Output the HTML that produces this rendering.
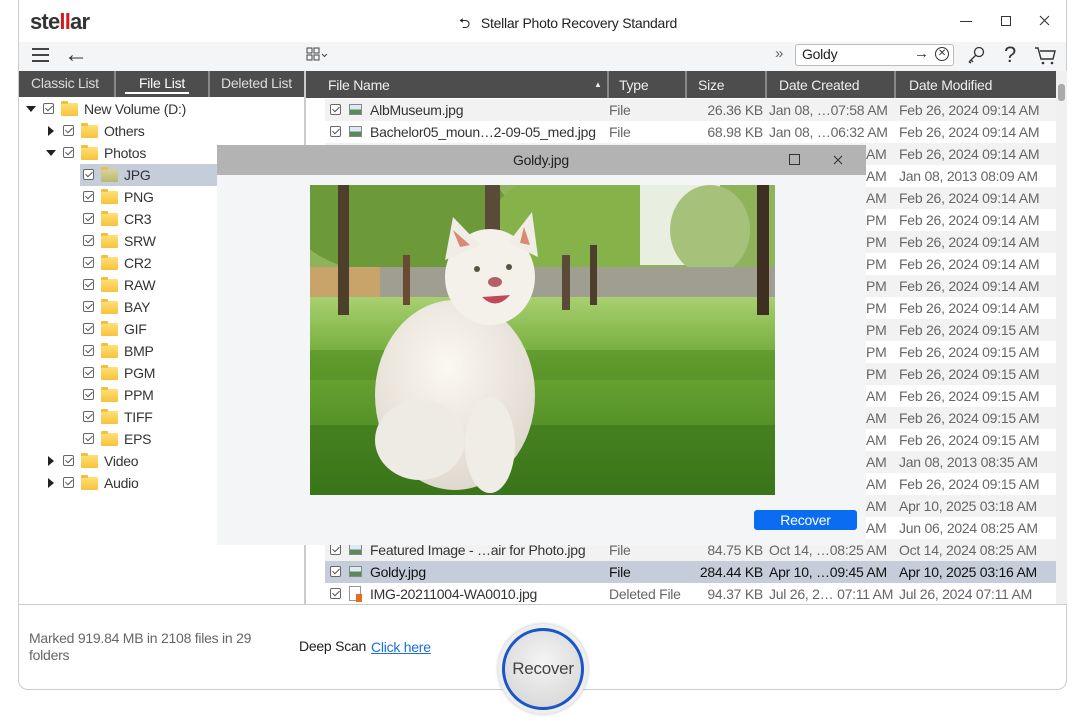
<!DOCTYPE html>
<html><head><meta charset="utf-8"><style>
*{margin:0;padding:0;box-sizing:border-box}
body{width:1082px;height:717px;background:#fff;font-family:"Liberation Sans",sans-serif;font-size:14px;color:#333;position:relative;overflow:hidden;letter-spacing:-0.25px}
.a{position:absolute;white-space:nowrap}
.win{position:absolute;left:18px;top:0;width:1049px;height:690px;border:1px solid #ccc;border-top:none;border-radius:0 0 10px 10px;background:#fff}
.cb{position:absolute;width:11px;height:11px;border:1px solid #666;border-radius:2px;background:#fff}
.cb:after{content:"";position:absolute;left:3px;top:0px;width:3px;height:6px;border:solid #555;border-width:0 1px 1px 0;transform:rotate(45deg)}
.fd{position:absolute;width:17px;height:13px;background:linear-gradient(#ffe07a,#f7c23a);border-radius:1px}
.fd:before{content:"";position:absolute;left:0;top:-2px;width:7px;height:3px;background:#f0c040;border-radius:1px 1px 0 0}
.tri{position:absolute;width:0;height:0}
.td{border-left:5px solid transparent;border-right:5px solid transparent;border-top:6px solid #222}
.tr{border-top:5px solid transparent;border-bottom:5px solid transparent;border-left:6px solid #222}
.row{position:absolute;left:325px;width:731px;height:22px}
.row span{position:absolute;top:3px}
.ic{position:absolute;left:24px;top:5px;width:13px;height:11px;border:1px solid #888;background:linear-gradient(#ddeaf5 50%,#5a8a5a 50%)}
</style></head><body>
<div class="win"></div>
<!-- title -->
<div class="a" style="left:30px;top:9px;font-size:22px;font-weight:bold;color:#333;letter-spacing:-0.8px">ste<span style="color:#d01c1c">ll</span>ar</div>
<div class="a" style="left:459px;top:13px;font-size:14px;color:#222">⮌&nbsp;&nbsp; Stellar Photo Recovery Standard</div>
<div class="a" style="left:960px;top:21px;width:12px;height:1px;background:#333"></div>
<div class="a" style="left:1001px;top:16px;width:10px;height:10px;border:1px solid #333"></div>
<svg class="a" style="left:1039px;top:15px" width="11" height="11"><path d="M1 1L10 10M10 1L1 10" stroke="#333" stroke-width="1.1"/></svg>
<!-- toolbar -->
<div class="a" style="left:19px;top:42px;width:1047px;height:29px;background:#f4f5f7"></div>
<div class="a" style="left:32px;top:48px;width:17px;height:2px;background:#444;box-shadow:0 6px 0 #444,0 12px 0 #444"></div>
<div class="a" style="left:64px;top:41px;font-size:24px;color:#333">←</div>
<svg class="a" style="left:306px;top:47px" width="26" height="16"><g fill="none" stroke="#444"><rect x="1" y="1" width="5" height="5"/><rect x="8" y="1" width="5" height="5"/><rect x="1" y="8" width="5" height="5"/><rect x="8" y="8" width="5" height="5"/><path d="M16 7l2.5 2.5L21 7"/></g></svg>
<div class="a" style="left:775px;top:45px;font-size:15px;color:#666">»</div>
<div class="a" style="left:795px;top:44px;width:159px;height:22px;border:1px solid #bbb;border-radius:3px;background:#fff"></div>
<div class="a" style="left:802px;top:46px;font-size:14px;color:#222">Goldy</div>
<div class="a" style="left:914px;top:45px;font-size:15px;color:#333">→</div>
<div class="a" style="left:935px;top:47px;width:14px;height:14px;border:1px solid #333;border-radius:50%;font-size:10px;line-height:12px;text-align:center">✕</div>
<svg class="a" style="left:966px;top:45px" width="20" height="20"><g fill="none" stroke="#333" stroke-width="1.3"><circle cx="13" cy="7" r="4.5"/><path d="M10 10L3 17M5 15l2 2M3 17l2 1"/></g></svg>
<div class="a" style="left:1004px;top:42px;font-size:22px;color:#333">?</div>
<svg class="a" style="left:1034px;top:46px" width="24" height="20"><g fill="none" stroke="#333" stroke-width="1.4"><path d="M1 2h3l3 11h12l2-8H6"/></g><circle cx="9" cy="17" r="1.3" fill="#333"/><circle cx="18" cy="17" r="1.3" fill="#333"/></svg>
<!-- tabs -->
<div class="a" style="left:19px;top:71px;width:285px;height:26px;background:#4d4d4d"></div>
<div class="a" style="left:114px;top:71px;width:2px;height:26px;background:#888"></div>
<div class="a" style="left:208px;top:71px;width:2px;height:26px;background:#888"></div>
<div class="a" style="left:31px;top:75px;color:#ddd">Classic List</div>
<div class="a" style="left:139px;top:75px;color:#fff">File List</div>
<div class="a" style="left:125px;top:92px;width:64px;height:2px;background:#fff"></div>
<div class="a" style="left:221px;top:75px;color:#ddd">Deleted List</div>
<div class="a" style="left:304px;top:71px;width:2px;height:533px;background:#ccc"></div>
<!-- tree -->
<div class="a" style="left:80px;top:164px;width:137px;height:22px;background:#c5cdda"></div>
<div class="tri td" style="left:26px;top:106px"></div><div class="cb" style="left:43px;top:103px"></div><div class="fd" style="left:61px;top:103px"></div><div class="a" style="left:84px;top:101px">New Volume (D:)</div>
<div class="tri tr" style="left:48px;top:126px"></div><div class="cb" style="left:63px;top:125px"></div><div class="fd" style="left:81px;top:125px"></div><div class="a" style="left:104px;top:123px">Others</div>
<div class="tri td" style="left:46px;top:150px"></div><div class="cb" style="left:63px;top:147px"></div><div class="fd" style="left:81px;top:147px"></div><div class="a" style="left:104px;top:145px">Photos</div>
<div class="cb" style="left:83px;top:169px"></div><div class="fd" style="left:101px;top:169px;background:linear-gradient(#d6d59a,#b9b870)"></div><div class="a" style="left:124px;top:167px">JPG</div>
<div class="cb" style="left:83px;top:191px"></div><div class="fd" style="left:101px;top:191px"></div><div class="a" style="left:124px;top:189px">PNG</div>
<div class="cb" style="left:83px;top:213px"></div><div class="fd" style="left:101px;top:213px"></div><div class="a" style="left:124px;top:211px">CR3</div>
<div class="cb" style="left:83px;top:235px"></div><div class="fd" style="left:101px;top:235px"></div><div class="a" style="left:124px;top:233px">SRW</div>
<div class="cb" style="left:83px;top:257px"></div><div class="fd" style="left:101px;top:257px"></div><div class="a" style="left:124px;top:255px">CR2</div>
<div class="cb" style="left:83px;top:279px"></div><div class="fd" style="left:101px;top:279px"></div><div class="a" style="left:124px;top:277px">RAW</div>
<div class="cb" style="left:83px;top:301px"></div><div class="fd" style="left:101px;top:301px"></div><div class="a" style="left:124px;top:299px">BAY</div>
<div class="cb" style="left:83px;top:323px"></div><div class="fd" style="left:101px;top:323px"></div><div class="a" style="left:124px;top:321px">GIF</div>
<div class="cb" style="left:83px;top:345px"></div><div class="fd" style="left:101px;top:345px"></div><div class="a" style="left:124px;top:343px">BMP</div>
<div class="cb" style="left:83px;top:367px"></div><div class="fd" style="left:101px;top:367px"></div><div class="a" style="left:124px;top:365px">PGM</div>
<div class="cb" style="left:83px;top:389px"></div><div class="fd" style="left:101px;top:389px"></div><div class="a" style="left:124px;top:387px">PPM</div>
<div class="cb" style="left:83px;top:411px"></div><div class="fd" style="left:101px;top:411px"></div><div class="a" style="left:124px;top:409px">TIFF</div>
<div class="cb" style="left:83px;top:433px"></div><div class="fd" style="left:101px;top:433px"></div><div class="a" style="left:124px;top:431px">EPS</div>
<div class="tri tr" style="left:48px;top:456px"></div><div class="cb" style="left:63px;top:455px"></div><div class="fd" style="left:81px;top:455px"></div><div class="a" style="left:104px;top:453px">Video</div>
<div class="tri tr" style="left:48px;top:478px"></div><div class="cb" style="left:63px;top:477px"></div><div class="fd" style="left:81px;top:477px"></div><div class="a" style="left:104px;top:475px">Audio</div>
<!-- table header -->
<div class="a" style="left:306px;top:71px;width:750px;height:27px;background:#4d4d4d"></div>
<div class="a" style="left:607px;top:71px;width:2px;height:27px;background:#888"></div>
<div class="a" style="left:685px;top:71px;width:2px;height:27px;background:#888"></div>
<div class="a" style="left:765px;top:71px;width:2px;height:27px;background:#888"></div>
<div class="a" style="left:894px;top:71px;width:2px;height:27px;background:#888"></div>
<div class="a" style="left:328px;top:77px;color:#eee">File Name</div>
<div class="a" style="left:594px;top:80px;font-size:8px;color:#eee">▲</div>
<div class="a" style="left:619px;top:77px;color:#eee">Type</div>
<div class="a" style="left:698px;top:77px;color:#eee">Size</div>
<div class="a" style="left:779px;top:77px;color:#eee">Date Created</div>
<div class="a" style="left:909px;top:77px;color:#eee">Date Modified</div>
<div class="a" style="left:1056px;top:71px;width:11px;height:533px;background:#f0f0f0"></div>
<div class="a" style="left:1058px;top:84px;width:7px;height:17px;background:#aaa;border-radius:3px"></div>
<!-- rows -->
<div class="row" style="top:99px;background:#f2f2f2"><div class="cb" style="left:5px;top:5px"></div><div class="ic"></div><span style="left:45px">AlbMuseum.jpg</span><span style="left:284px;color:#666">File</span><span style="right:293px;color:#666">26.36 KB</span><span style="left:444px;color:#666">Jan 08, …07:58 AM</span><span style="left:574px;color:#666">Feb 26, 2024 09:14 AM</span></div>
<div class="row" style="top:121px"><div class="cb" style="left:5px;top:5px"></div><div class="ic"></div><span style="left:45px">Bachelor05_moun…2-09-05_med.jpg</span><span style="left:284px;color:#666">File</span><span style="right:293px;color:#666">68.98 KB</span><span style="left:444px;color:#666">Jan 08, …06:32 AM</span><span style="left:574px;color:#666">Feb 26, 2024 09:14 AM</span></div>
<div class="row" style="top:143px;background:#f2f2f2"><span style="left:541px;color:#666">AM</span><span style="left:574px;color:#666">Feb 26, 2024 09:14 AM</span></div>
<div class="row" style="top:165px"><span style="left:541px;color:#666">AM</span><span style="left:574px;color:#666">Jan 08, 2013 08:09 AM</span></div>
<div class="row" style="top:187px;background:#f2f2f2"><span style="left:541px;color:#666">AM</span><span style="left:574px;color:#666">Feb 26, 2024 09:14 AM</span></div>
<div class="row" style="top:209px"><span style="left:541px;color:#666">PM</span><span style="left:574px;color:#666">Feb 26, 2024 09:14 AM</span></div>
<div class="row" style="top:231px;background:#f2f2f2"><span style="left:541px;color:#666">PM</span><span style="left:574px;color:#666">Feb 26, 2024 09:14 AM</span></div>
<div class="row" style="top:253px"><span style="left:541px;color:#666">PM</span><span style="left:574px;color:#666">Feb 26, 2024 09:14 AM</span></div>
<div class="row" style="top:275px;background:#f2f2f2"><span style="left:541px;color:#666">PM</span><span style="left:574px;color:#666">Feb 26, 2024 09:14 AM</span></div>
<div class="row" style="top:297px"><span style="left:541px;color:#666">PM</span><span style="left:574px;color:#666">Feb 26, 2024 09:14 AM</span></div>
<div class="row" style="top:319px;background:#f2f2f2"><span style="left:541px;color:#666">PM</span><span style="left:574px;color:#666">Feb 26, 2024 09:15 AM</span></div>
<div class="row" style="top:341px"><span style="left:541px;color:#666">PM</span><span style="left:574px;color:#666">Feb 26, 2024 09:15 AM</span></div>
<div class="row" style="top:363px;background:#f2f2f2"><span style="left:541px;color:#666">PM</span><span style="left:574px;color:#666">Feb 26, 2024 09:15 AM</span></div>
<div class="row" style="top:385px"><span style="left:541px;color:#666">AM</span><span style="left:574px;color:#666">Feb 26, 2024 09:15 AM</span></div>
<div class="row" style="top:407px;background:#f2f2f2"><span style="left:541px;color:#666">AM</span><span style="left:574px;color:#666">Feb 26, 2024 09:15 AM</span></div>
<div class="row" style="top:429px"><span style="left:541px;color:#666">AM</span><span style="left:574px;color:#666">Feb 26, 2024 09:15 AM</span></div>
<div class="row" style="top:451px;background:#f2f2f2"><span style="left:541px;color:#666">AM</span><span style="left:574px;color:#666">Jan 08, 2013 08:35 AM</span></div>
<div class="row" style="top:473px"><span style="left:541px;color:#666">AM</span><span style="left:574px;color:#666">Feb 26, 2024 09:15 AM</span></div>
<div class="row" style="top:495px;background:#f2f2f2"><span style="left:541px;color:#666">AM</span><span style="left:574px;color:#666">Apr 10, 2025 03:18 AM</span></div>
<div class="row" style="top:517px"><span style="left:541px;color:#666">AM</span><span style="left:574px;color:#666">Jun 06, 2024 08:25 AM</span></div>
<div class="row" style="top:539px;background:#f2f2f2"><div class="cb" style="left:5px;top:5px"></div><div class="ic"></div><span style="left:45px">Featured Image - …air for Photo.jpg</span><span style="left:284px;color:#666">File</span><span style="right:293px;color:#666">84.75 KB</span><span style="left:444px;color:#666">Oct 14, …08:25 AM</span><span style="left:574px;color:#666">Oct 14, 2024 08:25 AM</span></div>
<div class="row" style="top:561px;background:#c5cdda;color:#111"><div class="cb" style="left:5px;top:5px"></div><div class="ic"></div><span style="left:45px">Goldy.jpg</span><span style="left:284px">File</span><span style="right:293px">284.44 KB</span><span style="left:444px">Apr 10, …09:45 AM</span><span style="left:574px">Apr 10, 2025 03:16 AM</span></div>
<div class="row" style="top:583px"><div class="cb" style="left:5px;top:5px"></div><div class="a" style="left:24px;top:3px;width:12px;height:15px;border:1px solid #999;background:#fff"></div><div class="a" style="left:31px;top:11px;width:6px;height:8px;background:#e07020"></div><span style="left:45px">IMG-20211004-WA0010.jpg</span><span style="left:284px;color:#666">Deleted File</span><span style="right:293px;color:#666">94.37 KB</span><span style="left:444px;color:#666">Jul 26, 2… 07:11 AM</span><span style="left:574px;color:#666">Jul 26, 2024 07:11 AM</span></div>
<div class="a" style="left:19px;top:604px;width:1047px;height:1px;background:#ccc"></div>
<!-- popup -->
<div class="a" style="left:217px;top:145px;width:649px;height:400px;background:#f4f5f7"></div>
<div class="a" style="left:217px;top:145px;width:649px;height:30px;background:#b3b3b3"></div>
<div class="a" style="left:513px;top:152px;color:#222">Goldy.jpg</div>
<div class="a" style="left:789px;top:154px;width:11px;height:11px;border:1px solid #333"></div>
<svg class="a" style="left:833px;top:155px" width="10" height="10"><path d="M1 1L9 9M9 1L1 9" stroke="#333" stroke-width="1.1"/></svg>
<svg class="a" style="left:310px;top:185px" width="465" height="310" viewBox="0 0 465 310">
<defs><linearGradient id="g" x1="0" y1="0" x2="0" y2="1"><stop offset="0" stop-color="#a8d070"/><stop offset="0.35" stop-color="#6aa632"/><stop offset="1" stop-color="#3d7a1c"/></linearGradient>
<radialGradient id="d" cx="0.45" cy="0.35" r="0.7"><stop offset="0" stop-color="#fbf8f2"/><stop offset="1" stop-color="#ddd6cc"/></radialGradient></defs>
<rect width="465" height="120" fill="#8fb35a"/>
<ellipse cx="90" cy="30" rx="110" ry="60" fill="#6c9a38"/>
<ellipse cx="270" cy="40" rx="90" ry="55" fill="#86b24a"/>
<rect x="330" y="0" width="80" height="80" fill="#e8efe0"/>
<ellipse cx="400" cy="45" rx="40" ry="45" fill="#a6c27a"/>
<rect x="0" y="82" width="465" height="33" fill="#a09e90"/>
<rect x="0" y="82" width="70" height="33" fill="#c9a46a"/>
<rect x="0" y="112" width="465" height="198" fill="url(#g)"/>
<rect x="0" y="165" width="465" height="30" fill="#4f8a24" opacity="0.5"/>
<rect x="0" y="240" width="465" height="70" fill="#356f18" opacity="0.5"/>
<rect x="28" y="0" width="11" height="130" fill="#4e3f2c"/>
<rect x="175" y="0" width="15" height="60" fill="#5a4a38"/>
<rect x="252" y="70" width="8" height="55" fill="#5a4a38"/>
<rect x="280" y="60" width="7" height="60" fill="#4e3f2c"/>
<rect x="447" y="0" width="12" height="130" fill="#3e2f22"/>
<rect x="93" y="70" width="7" height="50" fill="#6a4a30"/>
<ellipse cx="145" cy="210" rx="80" ry="95" fill="url(#d)"/>
<ellipse cx="110" cy="255" rx="45" ry="40" fill="#eeeae4"/>
<ellipse cx="180" cy="260" rx="25" ry="48" fill="#f0ece6"/>
<ellipse cx="180" cy="92" rx="45" ry="48" fill="#f4f0ea"/>
<path d="M135 75L143 32L170 60Z" fill="#f0ece6"/><path d="M198 58L222 27L228 72Z" fill="#f0ece6"/>
<path d="M143 45L150 62L160 60Z" fill="#d98a70"/><path d="M214 42L220 60L210 58Z" fill="#d98a70"/>
<circle cx="167" cy="84" r="3" fill="#554"/><circle cx="199" cy="82" r="3" fill="#554"/>
<ellipse cx="185" cy="97" rx="7" ry="5" fill="#b3606a"/>
<path d="M172 112Q186 126 200 110Z" fill="#c04a58"/>
</svg>
<div class="a" style="left:754px;top:510px;width:103px;height:20px;background:#0a6cf0;border-radius:3px;color:#fff;text-align:center;line-height:20px;font-size:14px">Recover</div>
<!-- bottom -->
<div class="a" style="left:29px;top:630px;color:#666;line-height:17px;white-space:normal;width:250px">Marked 919.84 MB in 2108 files in 29 folders</div>
<div class="a" style="left:299px;top:638px;color:#222">Deep Scan</div>
<div class="a" style="left:371px;top:639px;color:#1a6fd8;text-decoration:underline">Click here</div>
<div class="a" style="left:498px;top:624px;width:90px;height:90px;border-radius:50%;background:#eee;box-shadow:0 0 3px #bbb"></div>
<div class="a" style="left:502px;top:628px;width:82px;height:82px;border-radius:50%;border:3px solid #1a56c8;background:radial-gradient(circle at 50% 40%,#f4f4f4,#d2d2d2);color:#444;font-size:17px;text-align:center;line-height:76px">Recover</div>
</body></html>
